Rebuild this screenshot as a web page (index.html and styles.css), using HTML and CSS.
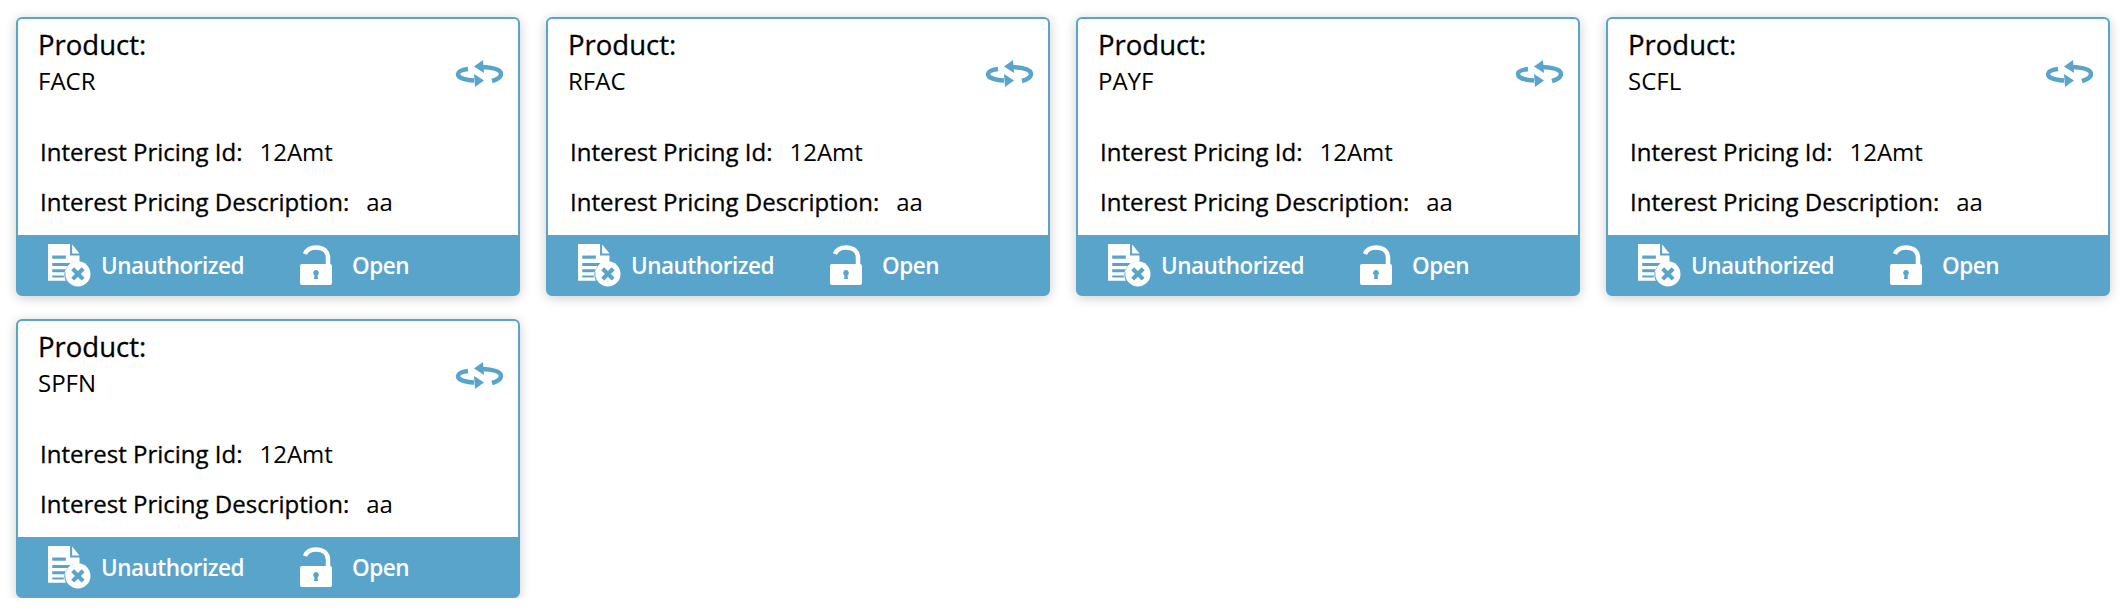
FILE: index.html
```html
<!DOCTYPE html>
<html lang="en">
<head>
<meta charset="utf-8">
<title>Interest Pricing</title>
<link rel="stylesheet" href="styles.css">
</head>
<body>
<svg class="defs" width="0" height="0" aria-hidden="true">
  <defs>
    <symbol id="swap" viewBox="0 0 48 28">
      <path d="M13 9 C6 10 3 11.500 3 14 C3 17.500 9 20 19 20.500" fill="none" stroke="currentColor" stroke-width="4.500"/>
      <path d="M19 14 L29 20.500 L20 27 Z" fill="currentColor"/>
      <path d="M26 7 C38 7.500 46 9.500 46 14 C46 17 42 19.500 37 21" fill="none" stroke="currentColor" stroke-width="4.500"/>
      <path d="M28 0 L19 6.500 L29 13 Z" fill="currentColor"/>
    </symbol>
    <symbol id="doc" viewBox="0 0 42 42">
      <path fill-rule="evenodd" d="M1 1 H22 V12 H31 V18 A12.500 12.500 0 0 0 18 36 H1 Z M5 12 V15 H18 V12 Z M5 19 V22 H22 V19 Z M5 25 V28 H18 V25 Z M5 31 V33 H16 V31 Z" fill="currentColor"/>
      <path d="M24 1.500 L31 10 H24 Z" fill="currentColor"/>
      <circle cx="29.500" cy="29.500" r="12" fill="currentColor"/>
      <path d="M24.500 24.500 L34.500 34.500 M34.500 24.500 L24.500 34.500" stroke="#59a4ca" stroke-width="4"/>
    </symbol>
    <symbol id="lock" viewBox="0 0 36 42">
      <path d="M6 9 C8 4 12 2.500 17 2.500 C25 2.500 29 7 29 13 V20" fill="none" stroke="currentColor" stroke-width="4.500"/>
      <path fill-rule="evenodd" d="M3 19 H31 Q33 19 33 21 V38 Q33 40 31 40 H3 Q1 40 1 38 V21 Q1 19 3 19 Z M17 25 A3 3 0 0 0 15.500 30.500 L15 34 H19 L18.500 30.500 A3 3 0 0 0 17 25 Z" fill="currentColor"/>
    </symbol>
  </defs>
</svg>
<main class="grid">
  <article class="card">
    <div class="card-body">
      <div class="head">
        <div class="product"><div class="label">Product:</div><div class="code">FACR</div></div>
        <svg class="swap"><use href="#swap"/></svg>
      </div>
      <p class="field first">Interest Pricing Id:<span class="val">12Amt</span></p>
      <p class="field">Interest Pricing Description:<span class="val">aa</span></p>
    </div>
    <div class="card-foot">
      <svg class="ico-doc"><use href="#doc"/></svg><span class="status">Unauthorized</span>
      <svg class="ico-lock"><use href="#lock"/></svg><span class="state">Open</span>
    </div>
  </article>
  <article class="card">
    <div class="card-body">
      <div class="head">
        <div class="product"><div class="label">Product:</div><div class="code">RFAC</div></div>
        <svg class="swap"><use href="#swap"/></svg>
      </div>
      <p class="field first">Interest Pricing Id:<span class="val">12Amt</span></p>
      <p class="field">Interest Pricing Description:<span class="val">aa</span></p>
    </div>
    <div class="card-foot">
      <svg class="ico-doc"><use href="#doc"/></svg><span class="status">Unauthorized</span>
      <svg class="ico-lock"><use href="#lock"/></svg><span class="state">Open</span>
    </div>
  </article>
  <article class="card">
    <div class="card-body">
      <div class="head">
        <div class="product"><div class="label">Product:</div><div class="code">PAYF</div></div>
        <svg class="swap"><use href="#swap"/></svg>
      </div>
      <p class="field first">Interest Pricing Id:<span class="val">12Amt</span></p>
      <p class="field">Interest Pricing Description:<span class="val">aa</span></p>
    </div>
    <div class="card-foot">
      <svg class="ico-doc"><use href="#doc"/></svg><span class="status">Unauthorized</span>
      <svg class="ico-lock"><use href="#lock"/></svg><span class="state">Open</span>
    </div>
  </article>
  <article class="card">
    <div class="card-body">
      <div class="head">
        <div class="product"><div class="label">Product:</div><div class="code">SCFL</div></div>
        <svg class="swap"><use href="#swap"/></svg>
      </div>
      <p class="field first">Interest Pricing Id:<span class="val">12Amt</span></p>
      <p class="field">Interest Pricing Description:<span class="val">aa</span></p>
    </div>
    <div class="card-foot">
      <svg class="ico-doc"><use href="#doc"/></svg><span class="status">Unauthorized</span>
      <svg class="ico-lock"><use href="#lock"/></svg><span class="state">Open</span>
    </div>
  </article>
  <article class="card">
    <div class="card-body">
      <div class="head">
        <div class="product"><div class="label">Product:</div><div class="code">SPFN</div></div>
        <svg class="swap"><use href="#swap"/></svg>
      </div>
      <p class="field first">Interest Pricing Id:<span class="val">12Amt</span></p>
      <p class="field">Interest Pricing Description:<span class="val">aa</span></p>
    </div>
    <div class="card-foot">
      <svg class="ico-doc"><use href="#doc"/></svg><span class="status">Unauthorized</span>
      <svg class="ico-lock"><use href="#lock"/></svg><span class="state">Open</span>
    </div>
  </article>
</main>
</body>
</html>
```
FILE: styles.css
```css
* { box-sizing: border-box; }
html, body { margin: 0; background: #fff; }
body { font-family: "Open Sans", "Noto Sans", sans-serif; color: #000; overflow: hidden; }
.defs { position: absolute; }
.grid {
  display: grid;
  grid-template-columns: repeat(4, 504px);
  column-gap: 26px;
  row-gap: 23px;
  padding: 17px 0 0 16px;
}
.card {
  height: 279px;
  display: flex;
  flex-direction: column;
  border: 2px solid #59a4ca;
  border-radius: 6px;
  background: #59a4ca;
  box-shadow: 0 2px 12px rgba(0, 0, 0, 0.2);
}
.card-body {
  height: 216px;
  background: #fff;
  border-radius: 4px 4px 0 0;
  padding: 0 0 0 20px;
}
.head {
  display: flex;
  justify-content: space-between;
  align-items: flex-start;
  height: 97px;
}
.label { font-size: 27.5px; line-height: 38px; margin-top: 7px; -webkit-text-stroke: 0.3px #000; }
.code { font-size: 24px; line-height: 33px; }
.swap { width: 48px; height: 28px; margin: 41px 15px 0 0; color: #59a4ca; }
.field {
  margin: 18px 0 0 2px;
  font-size: 24px;
  line-height: 32px;
  -webkit-text-stroke: 0.3px #000;
}
.field.first { margin-top: 20px; }
.val { margin-left: 17px; -webkit-text-stroke: 0; }
.card-foot {
  flex: 1;
  display: flex;
  align-items: center;
  color: #fff;
  font-size: 22.5px;
  font-weight: 600;
  letter-spacing: -0.5px;
  padding-left: 29px;
}
.ico-doc { width: 44px; height: 44px; }
.status { margin-left: 10px; width: 198px; padding-top: 2px; }
.ico-lock { width: 36px; height: 42px; margin-top: 2px; }
.state { margin-left: 17px; padding-top: 2px; }
```
